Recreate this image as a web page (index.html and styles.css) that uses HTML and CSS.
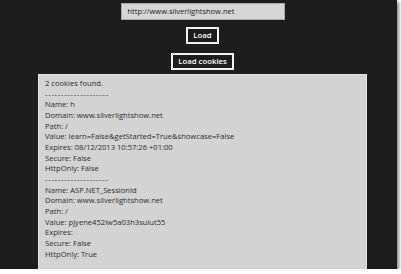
FILE: index.html
```html
<!DOCTYPE html>
<html>
	<head>
		<meta charset="utf-8">
		<title>Cookies</title>
		<link rel="stylesheet" href="styles.css">
	</head>
	<body>
		<div class="screen">
			<div class="url-box">http://www.silverlightshow.net</div>
			<button class="btn btn-load">Load</button>
			<button class="btn btn-cookies">Load cookies</button>
			<div class="result">
				<p>2 cookies found.</p>
				<p class="sep">--------------------</p>
				<p>Name: h</p>
				<p>Domain: www.silverlightshow.net</p>
				<p>Path: /</p>
				<p>Value: learn=False&amp;getStarted=True&amp;showcase=False</p>
				<p>Expires: 08/12/2013 10:57:26 +01:00</p>
				<p>Secure: False</p>
				<p>HttpOnly: False</p>
				<p class="sep">--------------------</p>
				<p>Name: ASP.NET_SessionId</p>
				<p>Domain: www.silverlightshow.net</p>
				<p>Path: /</p>
				<p>Value: pjyene452lw5a03h3suiut55</p>
				<p>Expires:</p>
				<p>Secure: False</p>
				<p>HttpOnly: True</p>
			</div>
		</div>
	</body>
</html>
```

FILE: styles.css
```css
*{margin: 0; padding: 0; box-sizing: border-box;}
body{background: #fff; font-family: "Open Sans", "Noto Sans", sans-serif;}
.screen{
	width: 397px; height: 269px; overflow: hidden;
	background: #1d1d1d;
	box-shadow: 2px 2px 3px #8a8a8a;
	display: flex; flex-direction: column; align-items: center;
	padding: 3px 0 0 8px;
}
.url-box{
	width: 164px; height: 17px;
	background: #d6d6d6; border: 1px solid #a8a8a8;
	color: #222; font-size: 7.5px; line-height: 15px;
	padding-left: 6px;
}
.btn{
	font-family: inherit; font-size: 7.8px; font-weight: 600; color: #fff;
	background: #1d1d1d; border: 2px solid #f2f2f2;
	line-height: 13px;
}
.btn-load{margin-top: 7px; width: 33px; height: 17px;}
.btn-cookies{margin-top: 9px; width: 63px; height: 18px;}
.result{
	margin-top: 4px; width: 329px; flex: none; height: 200px;
	background: #d3d3d3; border: 1px solid #e2e2e2;
	padding: 3px 0 0 6px;
	color: #2d2d2d; font-size: 7.6px; line-height: 10.67px;
}
.sep{letter-spacing: 0.75px;}
```
